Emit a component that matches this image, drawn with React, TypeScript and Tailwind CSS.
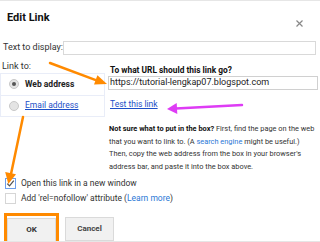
import React from "react";

function Radio({ checked }: { checked?: boolean }) {
  return (
    <span className="flex h-[10px] w-[10px] items-center justify-center rounded-full border border-[#c8c8c8] bg-[#e4e4e4]">
      {checked && <span className="h-[4px] w-[4px] rounded-full bg-[#555]" />}
    </span>
  );
}

function Checkbox({ checked }: { checked?: boolean }) {
  return (
    <span
      className={
        checked
          ? "flex h-[11px] w-[11px] items-center justify-center border border-[#6d9eeb] bg-white"
          : "flex h-[11px] w-[11px] items-center justify-center border border-[#d6d6d6] bg-white"
      }
    >
      {checked && (
        <svg width="9" height="9" viewBox="0 0 9 9">
          <path d="M1.2 4.6 L3.5 6.9 L7.8 1.6" fill="none" stroke="#555" strokeWidth="1.3" />
        </svg>
      )}
    </span>
  );
}

export default function App() {
  return (
    <div className="relative h-[242px] w-[320px] overflow-hidden border-t border-b border-[#e6e6e6] bg-white font-[Roboto,sans-serif] text-[8.5px] text-[#222]">
      {/* header */}
      <div className="flex h-[40px] justify-between">
        <div className="pl-[7px] pt-[10px] text-[11px] font-bold leading-[14px] text-[#111]">Edit Link</div>
        <svg className="mr-[17px] mt-[19px]" width="7" height="7" viewBox="0 0 7 7">
          <path d="M0.5 0.5 L6.5 6.5 M6.5 0.5 L0.5 6.5" stroke="#888" strokeWidth="1.2" />
        </svg>
      </div>

      {/* text to display */}
      <div className="flex h-[14px] items-center">
        <span className="w-[63px] pl-[3px] text-[9px] text-[#333]">Text to display:</span>
        <div className="mr-[4px] h-[14px] flex-1 border border-[#d9d9d9]" />
      </div>

      <div className="flex">
        {/* left column */}
        <div className="w-[105px] shrink-0">
          <div className="mt-[6px] pl-[2px] text-[9px] leading-[11px] text-[#333]">Link to:</div>
          <div className="mt-[1px] flex h-[44px] flex-col gap-[1px] bg-[#e9edf8] p-[1px]">
            <div className="flex flex-1 items-center gap-[6px] bg-white pl-[8px]">
              <Radio checked />
              <span className="font-bold text-[#222]">Web address</span>
            </div>
            <div className="flex flex-1 items-center gap-[6px] bg-white pl-[8px]">
              <Radio />
              <span className="text-[#1c4fc7] underline">Email address</span>
            </div>
          </div>
        </div>

        {/* right column */}
        <div className="ml-[3px] mr-[2px] flex-1">
          <div className="mt-[10px] pl-[2px] text-[8.4px] font-bold leading-[11px] text-[#111]">
            To what URL should this link go?
          </div>
          <div className="flex h-[14px] items-center border border-[#d0d0d0] pl-[1px] text-[9px] text-[#222]">
            https://tutorial-lengkap07.blogspot.com
          </div>
          <div className="mt-[9px] pl-[2px] leading-[11px] text-[#1c4fc7] underline">Test this link</div>
          <p className="mt-[13px] whitespace-nowrap pl-[1px] text-[7.4px] leading-[12.5px] text-[#333]">
            <b className="text-[#111]">Not sure what to put in the box?</b> First, find the page on the web
            <br />
            that you want to link to. (A <span className="text-[#2b78d6]">search engine</span> might be useful.)
            <br />
            Then, copy the web address from the box in your browser's
            <br />
            address bar, and paste it into the box above.
          </p>
        </div>
      </div>

      {/* options */}
      <div className="mt-[3px] pl-[5px]">
        <div className="flex h-[15px] items-center gap-[5px] text-[#333]">
          <Checkbox checked />
          <span>Open this link in a new window</span>
        </div>
        <div className="flex h-[15px] items-center gap-[5px] text-[#333]">
          <Checkbox />
          <span>
            Add 'rel=nofollow' attribute (<span className="text-[#2b78d6]">Learn more</span>)
          </span>
        </div>
      </div>

      {/* buttons */}
      <div className="mt-[7px] flex items-start pl-[4px]">
        <div className="h-[40px] border-[3px] border-b-0 border-[#ff8a00] pt-[2px]">
          <button className="h-[24px] w-[49px] border border-[#dadada] bg-[#f1f1f1] text-[8px] font-bold text-[#333]">
            OK
          </button>
        </div>
        <button className="ml-[6px] mt-[4px] h-[24px] w-[49px] border border-[#dadada] bg-[#f1f1f1] text-[8px] font-bold text-[#444]">
          Cancel
        </button>
      </div>

      {/* annotation arrows */}
      <svg className="pointer-events-none absolute left-0 top-0" width="320" height="242" viewBox="0 0 320 242">
        <path d="M50 62 L96.5 79.3" stroke="#ff8a00" strokeWidth="2.5" strokeLinecap="round" />
        <polygon points="107,83 94,83.6 97.4,74.2" fill="#ff8a00" />
        <path d="M242 104 L176 107.5" stroke="#de3cf5" strokeWidth="2.5" strokeLinecap="round" />
        <polygon points="167,108 177.3,113 176.7,102" fill="#de3cf5" />
        <path d="M23 116 L11 173" stroke="#ff8a00" strokeWidth="2.5" strokeLinecap="round" />
        <polygon points="8.3,183 16,173.3 5.2,171.1" fill="#ff8a00" />
      </svg>
    </div>
  );
}
